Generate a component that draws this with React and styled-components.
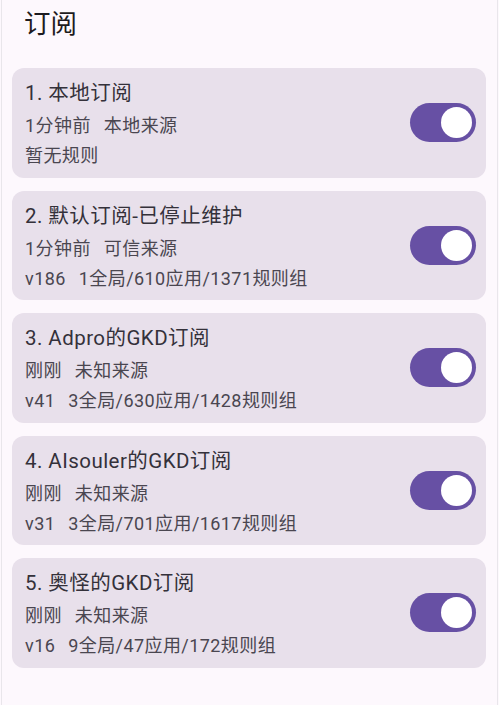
import React, { useState } from "react";
import styled, { createGlobalStyle } from "styled-components";

const Global = createGlobalStyle`
  html, body { margin: 0; padding: 0; background: #fdf8fd; }
  body { font-family: Roboto, "Noto Sans CJK SC", sans-serif; }
`;

const Frame = styled.div`
  box-sizing: border-box;
  margin-left: 1px;
  width: 497px;
  min-height: 705px;
  border-left: 1px solid #e9e6eb;
  border-right: 1px solid #e9e6eb;
  background: #fdf8fd;
  padding: 0 11px 20px 10px;
`;

const TopBar = styled.header`
  height: 68px;
  display: flex;
  align-items: flex-start;
  padding: 8px 0 0 12px;
  box-sizing: border-box;
`;

const Title = styled.h1`
  margin: 0;
  font-size: 26.5px;
  line-height: 32px;
  font-weight: 400;
  color: #1d1b20;
`;

const List = styled.div`
  display: flex;
  flex-direction: column;
  gap: 13px;
`;

const Card = styled.div`
  box-sizing: border-box;
  height: 109.5px;
  background: #e8e0eb;
  border-radius: 12px;
  display: flex;
  align-items: center;
  padding: 0 10px 0 13px;
`;

const Info = styled.div`
  flex: 1;
  display: flex;
  flex-direction: column;
  align-self: flex-start;
  padding-top: 11px;
`;

const Name = styled.div`
  font-size: 20.5px;
  line-height: 28px;
  letter-spacing: 0.45px;
  color: #34313a;
  margin-bottom: 7px;
`;

const Meta = styled.div`
  display: flex;
  gap: 13px;
  font-size: 18px;
  line-height: 24px;
  letter-spacing: 0.42px;
  color: #4a4650;
  margin-bottom: ${(p) => (p.$last ? 0 : 6)}px;
`;

const Track = styled.button`
  box-sizing: border-box;
  width: 66px;
  height: 39px;
  border-radius: 20px;
  border: none;
  padding: 0 4px;
  background: ${(p) => (p.$on ? "#6750a4" : "#e6e0e9")};
  display: flex;
  align-items: center;
  justify-content: ${(p) => (p.$on ? "flex-end" : "flex-start")};
  cursor: pointer;
`;

const Thumb = styled.span`
  width: 31px;
  height: 31px;
  border-radius: 50%;
  background: #ffffff;
`;

const data = [
  { name: "1. 本地订阅", time: "1分钟前", src: "本地来源", a: "暂无规则" },
  { name: "2. 默认订阅-已停止维护", time: "1分钟前", src: "可信来源", v: "v186", a: "1全局/610应用/1371规则组" },
  { name: "3. Adpro的GKD订阅", time: "刚刚", src: "未知来源", v: "v41", a: "3全局/630应用/1428规则组" },
  { name: "4. AIsouler的GKD订阅", time: "刚刚", src: "未知来源", v: "v31", a: "3全局/701应用/1617规则组" },
  { name: "5. 奥怪的GKD订阅", time: "刚刚", src: "未知来源", v: "v16", a: "9全局/47应用/172规则组" },
];

function Row({ item }) {
  const [on, setOn] = useState(true);
  return (
    <Card>
      <Info>
        <Name>{item.name}</Name>
        <Meta>
          <span>{item.time}</span>
          <span>{item.src}</span>
        </Meta>
        <Meta $last>
          {item.v && <span>{item.v}</span>}
          <span>{item.a}</span>
        </Meta>
      </Info>
      <Track $on={on} onClick={() => setOn(!on)}>
        <Thumb />
      </Track>
    </Card>
  );
}

export default function App() {
  return (
    <>
      <Global />
      <Frame>
        <TopBar>
          <Title>订阅</Title>
        </TopBar>
        <List>
          {data.map((d) => (
            <Row key={d.name} item={d} />
          ))}
        </List>
      </Frame>
    </>
  );
}
